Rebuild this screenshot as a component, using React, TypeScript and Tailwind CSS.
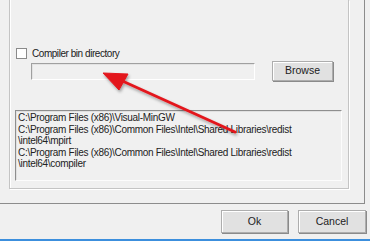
const font = { fontFamily: '"Liberation Sans", Arial, sans-serif' }

const Btn = ({ label, className = "" }: { label: string; className?: string }) => (
  <div
    className={`flex items-center justify-center bg-[#e1e1e1] border border-[#adadad] text-[10.5px] text-[#222] shadow-[inset_1px_1px_0_#fff,1px_1px_0_#8a8a8a] ${className}`}
  >
    {label}
  </div>
)

const paths = [
  "C:\\Program Files (x86)\\Visual-MinGW",
  "C:\\Program Files (x86)\\Common Files\\Intel\\Shared Libraries\\redist",
  "\\intel64\\mpirt",
  "C:\\Program Files (x86)\\Common Files\\Intel\\Shared Libraries\\redist",
  "\\intel64\\compiler",
]

export default function App() {
  return (
    <div className="relative w-[370px] h-[241px] overflow-hidden bg-[#f0f0f0] text-[#1a1a1a]" style={font}>
      <div className="flex flex-col h-full">
        {/* upper panel */}
        <div className="w-[365px] h-[204px] border-r border-b border-[#8c8c8c]">
          <div className="ml-[9px] w-[340px] h-[189px] border-l border-r border-b border-[#c4c4c4] shadow-[inset_1px_0_0_#fff,1px_1px_0_#fff] pl-[5px] pt-[48px] flex flex-col">
            <div className="flex items-center h-[11px]">
              <div className="ml-[1px] w-[11px] h-[11px] bg-white border border-[#8a8a8a]" />
              <span className="ml-[5px] text-[10px] leading-none tracking-[-0.45px]">Compiler bin directory</span>
            </div>
            <div className="flex items-center mt-[1px] h-[21px]">
              <div className="ml-[16px] w-[224px] h-[17px] mt-[2px] border border-[#a0a0a0] border-r-white border-b-white shadow-[inset_1px_1px_0_#e3e3e3]" />
              <Btn label="Browse" className="ml-[17px] w-[61px] h-[20px]" />
            </div>
            <div className="mt-[29px] w-[327px] h-[71px] border border-[#8e8e8e] border-r-[#fcfcfc] border-b-[#fcfcfc] shadow-[inset_1px_1px_0_#e0e0e0] pl-[2px] pt-[1px] text-[10px] leading-[11.6px] tracking-[-0.3px] text-[#222]">
              {paths.map((p, i) => (
                <div key={i} className="whitespace-nowrap">{p}</div>
              ))}
            </div>
          </div>
        </div>
        {/* buttons */}
        <div className="flex justify-end pr-[4px] pt-[6px] gap-[10px]">
          <Btn label="Ok" className="w-[67px] h-[23px]" />
          <Btn label="Cancel" className="w-[68px] h-[23px]" />
        </div>
        <div className="mt-auto h-[2px] bg-[#3c8fdd]" />
      </div>
      {/* red annotation arrow */}
      <svg className="absolute left-0 top-0 pointer-events-none" width="370" height="241">
        <defs>
          <filter id="sh" x="-20%" y="-20%" width="140%" height="140%">
            <feDropShadow dx="1" dy="2" stdDeviation="1.5" floodColor="#000" floodOpacity="0.35" />
          </filter>
        </defs>
        <g filter="url(#sh)" fill="#e3191f" stroke="#e3191f">
          <line x1="235" y1="132" x2="118" y2="79" strokeWidth="3" strokeLinecap="round" />
          <polygon points="103,73 128,74 119,90" strokeWidth="1" strokeLinejoin="round" />
        </g>
      </svg>
    </div>
  )
}
